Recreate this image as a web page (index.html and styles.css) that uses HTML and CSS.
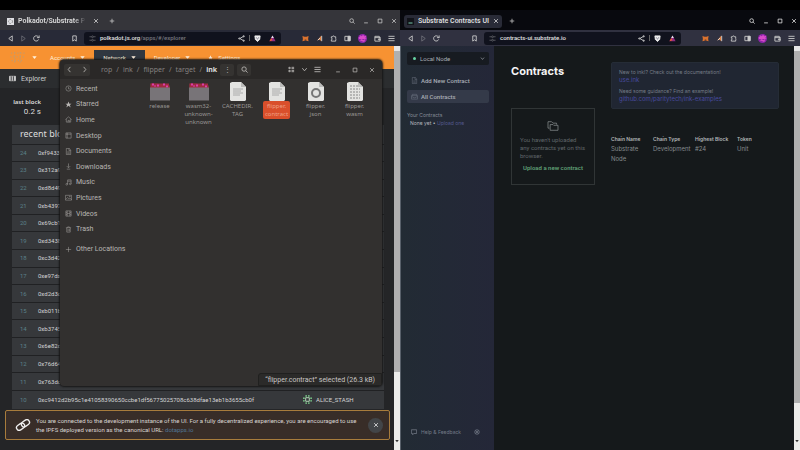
FILE: index.html
```html
<!DOCTYPE html>
<html lang="en">
<head>
<meta charset="utf-8">
<title>Desktop</title>
<link rel="stylesheet" href="styles.css">
</head>
<body>
<svg class="defs" aria-hidden="true">
  <symbol id="back" viewBox="0 0 16 16"><path d="M12 2 4 8l8 6z"/></symbol>
  <symbol id="forward" viewBox="0 0 16 16"><path d="m4 2 8 6-8 6z"/></symbol>
  <symbol id="reload" viewBox="0 0 16 16"><path d="M13 10a6 6 0 1 1-1-6l2 2M14 1v5H9"/></symbol>
  <symbol id="bookmark" viewBox="0 0 16 16"><path d="M4 2h8v12l-4-3-4 3z"/></symbol>
  <symbol id="tune" viewBox="0 0 16 16"><path d="M1 4h5M10 4h5M1 12h5M10 12h5"/><circle cx="8" cy="4" r="2"/><circle cx="8" cy="12" r="2"/></symbol>
  <symbol id="share" viewBox="0 0 16 16"><path d="M13 3 4 8l9 5"/><circle cx="13" cy="3" r="1.5"/><circle cx="3" cy="8" r="1.5"/><circle cx="13" cy="13" r="1.5"/></symbol>
  <symbol id="shield" viewBox="0 0 16 16"><path d="M2 2h12l-1 8-5 5-5-5z" fill="#eee" stroke="#eee"/><path d="m5 5 3 5 3-5" stroke="#889"/></symbol>
  <symbol id="bat" viewBox="0 0 16 16"><path d="m8 1 7 13H1z" fill="#8d2c83" stroke="none"/><path d="m8 1 3 6H5z" fill="#e8e8ee" stroke="none"/><path d="m1 14 4-7 3 5z" fill="#f05a35" stroke="none"/></symbol>
  <symbol id="fox" viewBox="0 0 16 16"><path d="m1 2 5 2h4l5-2-1 7 1 5-5-1H6l-5 1 1-5z" fill="#d9722e" stroke="none"/><path d="m6 11 2-1 2 1v2H6z" fill="#52342c" stroke="none"/></symbol>
  <symbol id="bird" viewBox="0 0 16 16"><path d="M12 1v14l-3-4-6 1 5-6z" fill="#e37b37" stroke="none"/><path d="M13 2v12M9 7l-5 5" stroke="#ddd"/></symbol>
  <symbol id="puzzle" viewBox="0 0 16 16"><path d="M3 4h3a2 2 0 0 1 4 0h3v4a2 2 0 0 1 0 3v3H3v-3a2 2 0 0 0 0-4z"/></symbol>
  <symbol id="panel" viewBox="0 0 16 16"><path d="M2 3h12v10H2z"/><path d="M9 3h5v10H9z" fill="currentColor"/></symbol>
  <symbol id="avatar" viewBox="0 0 16 16"><circle cx="8" cy="8" r="8" fill="#8d25aa" stroke="none"/><path d="m1 6 3-2-1-2 4 2 2-3 2 3 4-1-2 4 2 2H2zM3 11l4-2 2 2 4-2-2 5z" fill="#d84cc8" stroke="none"/></symbol>
  <symbol id="wallet" viewBox="0 0 16 16"><path d="M2 3h10v2h2v9H2zM2 6h12M10 9h4v2h-4z"/></symbol>
  <symbol id="menu" viewBox="0 0 16 16"><path d="M1 3h14M1 8h14M1 13h14"/></symbol>
  <symbol id="search" viewBox="0 0 16 16"><circle cx="7" cy="7" r="5"/><path d="m11 11 4 4"/></symbol>
  <symbol id="min" viewBox="0 0 16 16"><path d="M3 13h10"/></symbol>
  <symbol id="max" viewBox="0 0 16 16"><path d="M3 3h10v10H3z"/></symbol>
  <symbol id="close" viewBox="0 0 16 16"><path d="m3 3 10 10M13 3 3 13"/></symbol>
  <symbol id="plus" viewBox="0 0 16 16"><path d="M8 2v12M2 8h12"/></symbol>
  <symbol id="chev" viewBox="0 0 16 16"><path d="m3 5 5 6 5-6"/></symbol>
  <symbol id="left" viewBox="0 0 16 16"><path d="M10 2 5 8l5 6"/></symbol>
  <symbol id="right" viewBox="0 0 16 16"><path d="m6 2 5 6-5 6"/></symbol>
  <symbol id="caret" viewBox="0 0 16 16"><path d="M1 4h14l-7 9z" fill="currentColor" stroke="none"/></symbol>
  <symbol id="clock" viewBox="0 0 16 16"><circle cx="8" cy="8" r="6"/><path d="M8 4v5h3"/></symbol>
  <symbol id="star" viewBox="0 0 16 16"><path d="m8 1 2 5h5l-4 3 2 6-5-4-5 4 2-6-4-3h5z" fill="currentColor" stroke="none"/></symbol>
  <symbol id="home" viewBox="0 0 16 16"><path d="m1 8 7-6 7 6M3 7v7h10V7M7 14v-4h3v4"/></symbol>
  <symbol id="desk" viewBox="0 0 16 16"><path d="M2 2h12v12H2zM5 2v12M2 5h12"/></symbol>
  <symbol id="doc" viewBox="0 0 16 16"><path d="M3 1h7l3 4v10H3zM9 1v5h4M5 9h6M5 12h6"/></symbol>
  <symbol id="down" viewBox="0 0 16 16"><path d="M8 1v9M4 7l4 4 4-4M4 14h8"/></symbol>
  <symbol id="music" viewBox="0 0 16 16"><path d="M6 12V2h8v9M6 5h8"/><circle cx="4" cy="12" r="2"/><circle cx="12" cy="11" r="2"/></symbol>
  <symbol id="pic" viewBox="0 0 16 16"><path d="M1 3h14v11H1zM2 12l4-4 3 3 2-2 4 4"/><circle cx="11" cy="6" r="1"/></symbol>
  <symbol id="video" viewBox="0 0 16 16"><path d="M2 2h12v12H2zM5 2v12M11 2v12M5 8h6M2 6h3M2 10h3M11 6h3M11 10h3"/></symbol>
  <symbol id="trash" viewBox="0 0 16 16"><path d="M2 4h12M6 4V2h4v2M4 4v10h8V4M7 7v5M10 7v5"/></symbol>
  <symbol id="list" viewBox="0 0 16 16"><path d="M2 3h3v3H2zM2 10h3v3H2zM8 3h6M8 6h6M8 10h6M8 13h6"/></symbol>
  <symbol id="cube" viewBox="0 0 16 16"><path d="M1 3h14v10H1z" fill="currentColor"/><path d="M5 3v10M10 3v10" stroke="#2b2d2f"/></symbol>
  <symbol id="layers" viewBox="0 0 16 16"><path d="M3 6V3h10v3M1 6h14v8H1zM1 9h4l1 2h4l1-2h4"/></symbol>
  <symbol id="folders" viewBox="0 0 16 14"><path d="M3 10H1V1h5l2 2h5v2M4 5h4l1 1h6v7H4z"/></symbol>
  <symbol id="chat" viewBox="0 0 16 16"><path d="M1 2h14v10H8l-4 3v-3H1z"/></symbol>
  <symbol id="target" viewBox="0 0 16 16"><circle cx="8" cy="8" r="6"/><path d="m4 4 8 8M12 4l-8 8"/></symbol>
  <symbol id="link" viewBox="0 0 24 18"><g transform="rotate(-35 12 9)"><rect x="1" y="5" width="13" height="8" rx="4"/><rect x="10" y="5" width="13" height="8" rx="4"/></g></symbol>
  <symbol id="folder" viewBox="0 0 20 18"><path d="M0 1h8l2 2h10v14H0z" fill="#783039" stroke="none"/><path d="M1 1h18v5H1z" fill="#a02a40" stroke="none"/><path d="M2 1h2v2H2zM7 2h2v2H7zM13 1h2v2h-2zM16 3h2v2h-2zM4 3h2v1H4z" fill="#dc3dac" stroke="none"/><path d="M0 5h20v13H0z" fill="#787478" stroke="none"/></symbol>
  <symbol id="paper" viewBox="0 0 16 19"><path d="M2 0h9l5 5v13l-1 1H1l-1-1V1z" fill="#e3e3e1" stroke="none"/><path d="M11 0v5h5z" fill="#bcbcba" stroke="none"/></symbol>
  <symbol id="lines" viewBox="0 0 16 19"><path d="M3 7h10M3 9h8M3 11h10M3 13h7" stroke="#aaa"/></symbol>
  <symbol id="gear" viewBox="0 0 16 19"><circle cx="8" cy="11" r="4" stroke="#777" stroke-width="2"/></symbol>
  <symbol id="bits" viewBox="0 0 16 19"><path d="M3 4h8M3 7h10M3 10h10M3 13h10M3 16h10" stroke="#888" stroke-dasharray="2 1"/></symbol>
  <symbol id="ident" viewBox="0 0 20 20"><g fill="#79c888" stroke="none"><circle cx="7" cy="2" r="2"/><circle cx="13" cy="2" r="2"/><circle cx="7" cy="18" r="2"/><circle cx="13" cy="18" r="2"/><circle cx="2" cy="7" r="2"/><circle cx="2" cy="13" r="2"/><circle cx="18" cy="7" r="2"/><circle cx="18" cy="13" r="2"/></g><path d="M6 6h8v8H6z" stroke="#c0e2c2" stroke-width="2"/></symbol>
</svg>

<main class="desktop">
  <section class="browser polka">
    <header class="tabs">
      <div class="tab"><svg class="fav" viewBox="0 0 14 14"><path d="M0 0h14v14H0z" fill="#dedee2" stroke="none"/><circle cx="7" cy="7" r="4" stroke="#888" stroke-dasharray="3 2"/></svg><span class="tab-title">Polkadot/Substrate P</span><button aria-label="Close tab"><svg><use href="#close"/></svg></button></div>
      <button aria-label="New tab"><svg><use href="#plus"/></svg></button>
      <div class="controls"><button aria-label="Search tabs"><svg><use href="#search"/></svg></button><button aria-label="Minimize"><svg><use href="#min"/></svg></button><button aria-label="Maximize"><svg><use href="#max"/></svg></button><button aria-label="Close"><svg><use href="#close"/></svg></button></div>
    </header>
    <nav class="toolbar">
      <div class="travel"><button aria-label="Back"><svg><use href="#back"/></svg></button><button class="off" aria-label="Forward"><svg><use href="#forward"/></svg></button><button aria-label="Reload"><svg><use href="#reload"/></svg></button></div>
      <button aria-label="Bookmark"><svg><use href="#bookmark"/></svg></button>
      <div class="address"><svg class="off"><use href="#tune"/></svg><span class="url">polkadot.js.org<span>/apps/#/explorer</span></span><svg><use href="#share"/></svg><i></i><svg><use href="#shield"/></svg><svg><use href="#bat"/></svg></div>
      <div class="extensions"><svg><use href="#fox"/></svg><svg><use href="#bird"/></svg><svg><use href="#puzzle"/></svg><svg><use href="#panel"/></svg><svg class="me"><use href="#avatar"/></svg><svg><use href="#wallet"/></svg><svg><use href="#menu"/></svg></div>
    </nav>
    <div class="viewport">
      <div class="page">
        <nav class="apps"><a class="brand" href="#"><svg class="logo" viewBox="0 0 32 24"><path d="M3 5h22M2 11h24M4 17h20M9 3v18M18 3v18" stroke="#c69a68" stroke-width="2" stroke-dasharray="2 3"/></svg><svg><use href="#caret"/></svg></a><a href="#">Accounts <svg><use href="#caret"/></svg></a><a class="current" href="#">Network <svg><use href="#caret"/></svg></a><a href="#">Developer <svg><use href="#caret"/></svg></a><a href="#"><svg><use href="#star"/></svg> Settings</a></nav>
        <div class="crumb"><svg><use href="#cube"/></svg>Explorer</div>
        <div class="summary"><b>last block</b><span>0.2 s</span></div>
        <table class="blocks">
          <colgroup><col class="num"><col><col class="by"></colgroup>
          <thead><tr><th colspan="3">recent blocks</th></tr></thead>
          <tbody>
            <tr><td>24</td><td>0xf9433</td><td></td></tr>
            <tr><td>23</td><td>0x312a9</td><td></td></tr>
            <tr><td>22</td><td>0xd8d49</td><td></td></tr>
            <tr><td>21</td><td>0xb4397</td><td></td></tr>
            <tr><td>20</td><td>0x69cb1</td><td></td></tr>
            <tr><td>19</td><td>0xd3438</td><td></td></tr>
            <tr><td>18</td><td>0xc3d42</td><td></td></tr>
            <tr><td>17</td><td>0xe97da</td><td></td></tr>
            <tr><td>16</td><td>0xd2d3c</td><td></td></tr>
            <tr><td>15</td><td>0xb011b</td><td></td></tr>
            <tr><td>14</td><td>0xb3745</td><td></td></tr>
            <tr><td>13</td><td>0x6e82d</td><td></td></tr>
            <tr><td>12</td><td>0x76d64</td><td></td></tr>
            <tr><td>11</td><td>0x763dc</td><td></td></tr>
            <tr><td>10</td><td>0xc9412d2b95c1e41058390650ccbe1df56775025708c638dfae13eb1b3655cb0f</td><td><span class="author"><svg><use href="#ident"/></svg>ALICE_STASH</span></td></tr>
          </tbody>
        </table>
        <aside class="notice"><svg><use href="#link"/></svg><p>You are connected to the development instance of the UI. For a fully decentralized experience, you are encouraged to use the IPFS deployed version as the canonical URL: <a href="#">dotapps.io</a></p><button aria-label="Dismiss"><svg><use href="#close"/></svg></button></aside>
      </div>
      <div class="scroll"><i></i><svg><use href="#caret"/></svg></div>
    </div>
    <section class="files">
      <header class="files-bar">
        <div class="group"><button aria-label="Previous folder"><svg><use href="#left"/></svg></button><button aria-label="Next folder"><svg><use href="#right"/></svg></button></div>
        <div class="path"><span>rop</span><span>/</span><span>ink</span><span>/</span><span>flipper</span><span>/</span><span>target</span><span>/</span><b>ink</b></div>
        <button class="box" aria-label="Folder menu">⋮</button><button class="box" aria-label="Search files"><svg><use href="#search"/></svg></button>
        <div class="files-view"><button aria-label="List view"><svg><use href="#list"/></svg></button><button aria-label="View options"><svg><use href="#chev"/></svg></button><button aria-label="Menu"><svg><use href="#menu"/></svg></button></div>
        <div class="files-controls"><button aria-label="Minimize"><svg><use href="#min"/></svg></button><button aria-label="Maximize"><svg><use href="#max"/></svg></button><button aria-label="Close"><svg><use href="#close"/></svg></button></div>
      </header>
      <div class="files-body">
        <nav class="places">
          <div class="place-list"><a href="#"><svg><use href="#clock"/></svg>Recent</a><a href="#"><svg><use href="#star"/></svg>Starred</a><a href="#"><svg><use href="#home"/></svg>Home</a><a href="#"><svg><use href="#desk"/></svg>Desktop</a><a href="#"><svg><use href="#doc"/></svg>Documents</a><a href="#"><svg><use href="#down"/></svg>Downloads</a><a href="#"><svg><use href="#music"/></svg>Music</a><a href="#"><svg><use href="#pic"/></svg>Pictures</a><a href="#"><svg><use href="#video"/></svg>Videos</a><a href="#"><svg><use href="#trash"/></svg>Trash</a></div>
          <a class="other" href="#"><svg><use href="#plus"/></svg>Other Locations</a>
        </nav>
        <div class="icons">
          <figure><svg><use href="#folder"/></svg><figcaption>release</figcaption></figure>
          <figure><svg><use href="#folder"/></svg><figcaption>wasm32-<br>unknown-<br>unknown</figcaption></figure>
          <figure><svg><use href="#paper"/><use href="#lines"/></svg><figcaption>CACHEDIR.<br>TAG</figcaption></figure>
          <figure class="selected"><svg><use href="#paper"/><use href="#lines"/></svg><figcaption>flipper.<br>contract</figcaption></figure>
          <figure><svg><use href="#paper"/><use href="#gear"/></svg><figcaption>flipper.<br>json</figcaption></figure>
          <figure><svg><use href="#paper"/><use href="#bits"/></svg><figcaption>flipper.<br>wasm</figcaption></figure>
        </div>
      </div>
      <div class="status">“flipper.contract” selected (26.3 kB)</div>
    </section>
  </section>

  <section class="browser contracts">
    <header class="tabs">
      <div class="tab"><svg class="fav" viewBox="0 0 14 14"><path d="M0 0h14v14H0z" fill="#111319" stroke="none"/><path d="M3 10h8" stroke="#79c9ad" stroke-width="2"/></svg><span class="tab-title">Substrate Contracts UI</span><button aria-label="Close tab"><svg><use href="#close"/></svg></button></div>
      <button aria-label="New tab"><svg><use href="#plus"/></svg></button>
      <div class="controls"><button aria-label="Search tabs"><svg><use href="#search"/></svg></button><button aria-label="Minimize"><svg><use href="#min"/></svg></button><button aria-label="Maximize"><svg><use href="#max"/></svg></button><button aria-label="Close"><svg><use href="#close"/></svg></button></div>
    </header>
    <nav class="toolbar">
      <div class="travel"><button aria-label="Back"><svg><use href="#back"/></svg></button><button class="off" aria-label="Forward"><svg><use href="#forward"/></svg></button><button aria-label="Reload"><svg><use href="#reload"/></svg></button></div>
      <button aria-label="Bookmark"><svg><use href="#bookmark"/></svg></button>
      <div class="address"><svg class="off"><use href="#tune"/></svg><span class="url">contracts-ui.substrate.io</span><svg><use href="#share"/></svg><i></i><svg><use href="#shield"/></svg><svg><use href="#bat"/></svg></div>
      <div class="extensions"><svg><use href="#fox"/></svg><svg><use href="#bird"/></svg><svg><use href="#puzzle"/></svg><svg><use href="#panel"/></svg><svg class="me"><use href="#avatar"/></svg><svg><use href="#wallet"/></svg><svg><use href="#menu"/></svg></div>
    </nav>
    <div class="viewport">
      <aside class="side">
        <button class="node"><i></i><span>Local Node</span><svg><use href="#chev"/></svg></button>
        <nav class="side-nav"><a href="#"><svg><use href="#doc"/></svg>Add New Contract</a><a class="current" href="#"><svg><use href="#layers"/></svg>All Contracts</a></nav>
        <h2>Your Contracts</h2>
        <p>None yet <span>•</span> <a href="#">Upload one</a></p>
        <footer><a href="#"><svg><use href="#chat"/></svg>Help &amp; Feedback</a><svg><use href="#target"/></svg></footer>
      </aside>
      <div class="main">
        <div class="col-a"><h1>Contracts</h1>
          <div class="empty"><svg><use href="#folders"/></svg><p>You haven't uploaded any contracts yet on this browser.</p><a href="#">Upload a new contract</a></div>
        </div>
        <div class="col-b">
          <div class="help"><p>New to ink!? Check out the documentation!<br><a href="#">use.ink</a></p><p>Need some guidance? Find an example!<br><a href="#">github.com/paritytech/ink-examples</a></p></div>
          <dl class="facts"><div><dt>Chain Name</dt><dd>Substrate Node</dd></div><div><dt>Chain Type</dt><dd>Development</dd></div><div><dt>Highest Block</dt><dd>#24</dd></div><div><dt>Token</dt><dd>Unit</dd></div></dl>
        </div>
      </div>
      <div class="scroll"><i></i><svg><use href="#caret"/></svg></div>
    </div>
  </section>
</main>
</body>
</html>
```
FILE: styles.css
```css
* { box-sizing: border-box; margin: 0; }
body { background: #000; color: #ccc; font: 6px/8px Roboto, sans-serif; }
button { display: flex; align-items: center; justify-content: center; padding: 0; border: 0; background: none; color: inherit; font: inherit; }
a { color: inherit; text-decoration: none; }
svg { width: 7px; height: 7px; flex: none; display: block; fill: none; stroke: currentColor; stroke-width: 2; }
.defs { position: absolute; width: 0; height: 0; }
.off { opacity: .4; }

.desktop { display: grid; grid-template-columns: 1fr 1fr; min-height: 100vh; padding-top: 10px; }
.browser { position: relative; display: flex; flex-direction: column; min-width: 0; background: #15191b; }

.tabs { display: flex; align-items: center; height: 20px; padding: 2px 3px 0 4px; gap: 7px; background: #35353a; }
.contracts .tabs { background: #08090e; }
.tab { display: flex; align-items: center; width: 98px; height: 13px; padding: 0 3px; border-radius: 3px; font-size: 7px; font-weight: 600; color: #ddd; }
.contracts .tab { background: #292b37; }
.fav { width: 7px; height: 7px; margin-right: 4px; }
.tab-title { flex: 1; overflow: hidden; white-space: nowrap; }
.polka .tab-title { mask-image: linear-gradient(90deg, #000 75%, transparent 90%); }
.tabs button svg { width: 6px; height: 6px; }
.controls { display: flex; gap: 8px; margin-left: auto; color: #ccc; }
.contracts .tabs .controls { color: #eee; }

.toolbar { display: flex; align-items: center; height: 16px; padding: 0 5px 0 7px; background: #282a37; color: #ccc; }
.contracts .toolbar { background: #303140; }
.travel { display: flex; gap: 6px; margin-right: 31px; }
.address { display: flex; align-items: center; gap: 8px; flex: 1; height: 13px; margin-left: 6px; padding: 0 5px; border-radius: 3px; background: #10121d; }
.address svg { width: 7px; height: 7px; }
.address i { width: 1px; height: 6px; margin: 0 -4px; background: #666; }
.url { flex: 1; font-weight: 500; color: #e2e2e2; margin-left: -4px; }
.url span { color: #74757c; }
.extensions { display: flex; align-items: center; gap: 7px; margin-left: 21px; }
.extensions .me { width: 9px; height: 9px; }

.viewport { display: flex; flex: 1; min-height: 0; }
.scroll { display: flex; flex-direction: column; align-items: center; width: 6px; padding-bottom: 7px; background: #ececea; }
.scroll i { width: 100%; height: 82%; border-top: 5px solid #e5e5e5; background: #b0b0b0; }
.contracts .scroll i { height: 90%; }
.scroll svg { width: 4px; height: 4px; margin-top: auto; color: #333; }
.page { position: relative; flex: 1; min-width: 0; background: #242527; }
.apps { display: flex; align-items: center; height: 23px; padding-left: 9px; background: #f79232; color: #fff1dd; }
.apps a { display: flex; align-items: center; gap: 5px; padding: 0 9px; height: 16px; white-space: nowrap; }
.apps svg { width: 5px; height: 5px; }
.apps .brand { gap: 3px; padding: 0 4px 0 0; }
.apps .logo { width: 20px; height: 15px; }
.apps .current { background: #303740; }
.crumb { display: flex; align-items: center; gap: 5px; height: 19px; padding-left: 9px; background: #2b2d2f; font-size: 7px; }
.summary { width: 41px; padding-top: 9px; margin-bottom: 9px; text-align: right; color: #ddd; line-height: 9px; }
.summary b { font: 600 6px/9px "Noto Sans", sans-serif; }
.summary span { display: block; font-size: 8px; }
.blocks { width: calc(100% - 22px); height: 284px; margin: 0 10px 0 12px; border-collapse: collapse; table-layout: fixed; background: #36383b; color: #d4d4d4; }
.blocks th { height: 19px; padding: 0 8px; text-align: left; font: 9px/10px "Noto Sans", sans-serif; color: #ddd; }
.blocks td { padding: 0; border-top: 1px solid #202123; white-space: nowrap; }
.blocks td:first-child { padding-left: 8px; color: #5b8189; }
.blocks .num { width: 26px; }
.blocks .by { width: 81px; }
.author { display: flex; align-items: center; gap: 4px; }
.author svg { width: 9px; height: 9px; }
.notice { position: absolute; left: 5px; right: 4px; bottom: 10px; display: flex; align-items: center; gap: 5px; padding: 5px 6px 5px 9px; border: 1px solid #a87c3c; border-radius: 2px; background: #382d28; color: #d8d5d2; line-height: 9px; }
.notice svg { width: 16px; height: 12px; color: #eee; }
.notice p { flex: 1; }
.notice p a { color: #4f7494; }
.notice button { width: 15px; height: 15px; border-radius: 50%; background: #424548; }
.notice button svg { width: 6px; height: 6px; }

.files { position: absolute; top: 50px; left: 60px; right: 18px; height: 326px; display: flex; flex-direction: column; border-radius: 4px; overflow: hidden; background: #32302f; box-shadow: 0 0 2px 1px #161616; color: #b8b6b3; }
.files-bar { display: flex; align-items: center; height: 19px; padding: 0 7px 0 4px; background: #2a2827; font: 7px/8px "Noto Sans", sans-serif; }
.group { display: flex; align-items: center; gap: 8px; height: 12px; padding: 0 2px; border-radius: 2px; background: #353331; }
.path { display: flex; gap: 4px; margin: 0 3px 0 11px; color: #858280; }
.path b { color: #ddd; }
.box { width: 14px; height: 12px; margin-right: 3px; border-radius: 2px; background: #353331; }
.files-view { display: flex; gap: 6px; margin-left: auto; padding-left: 8px; }
.files-controls { display: flex; gap: 11px; margin-left: 14px; }
.files-controls svg { width: 6px; height: 6px; }
.files-body { display: flex; flex: 1; }
.places { width: 80px; padding: 2px 5px; font-size: 7px; }
.place-list { display: flex; flex-direction: column; height: 156px; margin-bottom: 4px; }
.places a { display: flex; align-items: center; gap: 4px; flex: 1; white-space: nowrap; }
.places svg { stroke-width: 1; }
.places .other { height: 16px; }
.icons { display: grid; grid-template-columns: repeat(6, 39px); align-content: start; padding-top: 3px; }
.icons figure { display: flex; flex-direction: column; align-items: center; color: #999694; font: 6px/8px "Noto Sans", sans-serif; text-align: center; }
.icons figure svg { width: 20px; height: 19px; stroke-width: 1; }
.icons figcaption { padding: 1px 3px; }
.icons .selected figcaption { padding: 1px 2px; background: #d94f2b; color: #f0a084; border-radius: 2px; }
.status { position: absolute; right: 0; bottom: 0; padding: 2px 6px 1px; border: 1px solid #20201f; border-radius: 3px 0 0; background: #2b2a29; color: #c8c6c4; font-size: 7px; line-height: 8px; }

.side { display: flex; flex-direction: column; width: 94px; padding: 6px 5px 14px 6px; border-left: 1px solid #58606a; background: linear-gradient(90deg, #222b34, #242738); color: #a9adb5; }
.node { height: 13px; gap: 4px; padding: 0 4px 0 6px; border-radius: 2px; background: #171b21; }
.node i { width: 3px; height: 3px; border-radius: 50%; background: #67d5a3; }
.node span { flex: 1; text-align: left; }
.node svg { width: 5px; height: 5px; }
.side-nav { display: flex; flex-direction: column; gap: 3px; margin-top: 9px; font-weight: 500; }
.side-nav a { display: flex; align-items: center; gap: 3px; height: 13px; padding-left: 4px; border-radius: 2px; }
.side-nav svg { color: #777f8b; stroke-width: 1; }
.side-nav .current { background: #343a49; }
.side h2, .side p, .side footer { font-family: Inter, sans-serif; font-size: 5px; line-height: 8px; }
.side h2 { margin-top: 8px; color: #858b97; font-weight: 400; }
.side p { padding-left: 3px; color: #b5b8be; }
.side p a { color: #54598e; }
.side footer { display: flex; align-items: center; justify-content: space-between; margin-top: auto; padding: 0 9px 0 4px; color: #747b87; }
.side footer a { display: flex; align-items: center; gap: 4px; }
.side footer svg { width: 6px; height: 6px; }
.main { display: flex; gap: 16px; flex: 1; min-width: 0; padding: 16px 15px 0 17px; font-family: Inter, sans-serif; }
.col-a { width: 84px; flex: none; }
.col-b { flex: 1; min-width: 0; }
.main h1 { margin-bottom: 28px; color: #f5f5f5; font-size: 11px; line-height: 18px; }
.empty { display: flex; flex-direction: column; align-items: center; height: 77px; padding: 12px 8px 0; border: 1px solid #303536; color: #60666a; font: 6px/8px Roboto, sans-serif; }
.empty svg { width: 12px; height: 10px; color: #8d9294; stroke-width: 1; }
.empty p { align-self: stretch; margin: 5px 0 4px; }
.empty a { color: #5f9f75; font-weight: 600; white-space: nowrap; }
.help { display: flex; flex-direction: column; gap: 3px; height: 47px; padding: 5px 7px; border: 1px solid #252c36; border-radius: 2px; background: #202632; color: #777d87; font-size: 5px; line-height: 8px; }
.help a { color: #494b9e; font-size: 6px; }
.facts { display: grid; grid-template-columns: repeat(4, 1fr); margin-top: 26px; }
.facts dt { color: #b3b7b8; font-size: 5px; font-weight: 600; white-space: nowrap; line-height: 8px; }
.facts dd { color: #858b8d; line-height: 10px; margin-top: 1px; }
```
